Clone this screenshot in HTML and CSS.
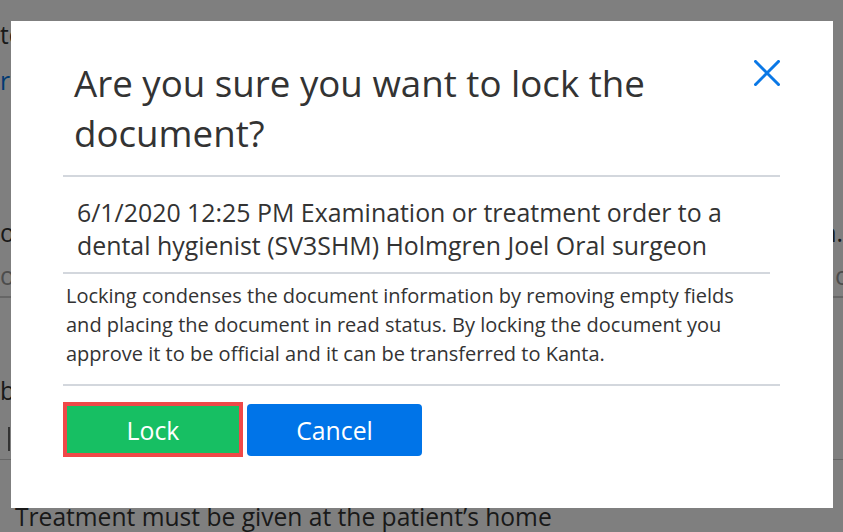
FILE: index.html
```html
<!DOCTYPE html>
<html lang="en">
<head>
<meta charset="utf-8">
<title>Lock document</title>
<link rel="stylesheet" href="styles.css">
</head>
<body>
<main class="page">
  <p class="bg-text bg-first">teeth cleaning and examination of the patient</p>
  <a class="bg-link" href="#">referral to the dental hygienist</a>
  <div class="bg-row">
    <span>ojekt for the home visit of the patient</span>
    <span>visit plan.</span>
  </div>
  <div class="bg-inputs">
    <span class="bg-input">ohje</span>
    <span class="bg-input">ohje</span>
  </div>
  <p class="bg-text bg-label">basis of the treatment</p>
  <div class="bg-box"></div>
  <p class="bg-text bg-last">Treatment must be given at the patient’s home</p>
</main>

<div class="overlay">
  <section class="modal" role="dialog" aria-labelledby="lock-title">
    <header class="modal-header">
      <h1 class="modal-title" id="lock-title">Are you sure you want to lock the document?</h1>
      <button class="close" type="button" aria-label="Close">
        <svg width="26" height="26" viewBox="0 0 26 26" aria-hidden="true">
          <path d="M1.5 1.5 L24.5 24.5 M24.5 1.5 L1.5 24.5" stroke="#0a78e6" stroke-width="3" stroke-linecap="square" fill="none"/>
        </svg>
      </button>
    </header>
    <div class="rule"></div>
    <div class="doc-item">6/1/2020 12:25 PM Examination or treatment order to a dental hygienist (SV3SHM) Holmgren Joel Oral surgeon</div>
    <p class="doc-note">Locking condenses the document information by removing empty fields and placing the document in read status. By locking the document you approve it to be official and it can be transferred to Kanta.</p>
    <div class="rule"></div>
    <div class="actions">
      <button class="btn btn-lock" type="button">Lock</button>
      <button class="btn btn-cancel" type="button">Cancel</button>
    </div>
  </section>
</div>
</body>
</html>
```

FILE: styles.css
```css
html, body {
  margin: 0;
  height: 100%;
  overflow: hidden;
}

body {
  font-family: "Open Sans", "Noto Sans", sans-serif;
  color: #333;
  background: #fff;
}

/* background page */
.page {
  font-size: 24.6px;
  line-height: 33px;
  white-space: nowrap;
}

.bg-text {
  margin: 0;
}

.bg-first {
  padding-top: 18px;
}

.bg-link {
  display: block;
  margin-top: 13px;
  color: #0074e6;
  text-decoration: none;
}

.bg-row {
  display: flex;
  justify-content: space-between;
  margin-top: 119px;
}

.bg-inputs {
  display: grid;
  grid-template-columns: 835px 1fr;
  margin-top: 10px;
  border-bottom: 2px solid #ccc;
  padding-bottom: 4px;
}

.bg-input {
  color: #999;
}

.bg-label {
  margin-top: 76px;
}

.bg-box {
  margin: 20px 0 0 8px;
  height: 24px;
  border-left: 2px solid #666;
}

.bg-last {
  border-top: 1px solid #ccc;
  margin-top: 8px;
  padding-top: 40px;
  padding-left: 15px;
}

/* modal */
.overlay {
  position: fixed;
  inset: 0;
  background: rgba(0, 0, 0, 0.5);
  display: flex;
  padding: 21px 10px 24px 11px;
  box-sizing: border-box;
}

.modal {
  flex: 1;
  background: #fff;
  padding: 37px 53px 0 52px;
}

.modal-header {
  display: flex;
  justify-content: space-between;
  align-items: flex-start;
  margin-bottom: 17px;
}

.modal-title {
  margin: 0;
  padding-left: 11px;
  font-size: 36.7px;
  line-height: 50px;
  font-weight: 400;
  color: #333;
}

.close {
  flex: none;
  width: 26px;
  height: 26px;
  margin-top: 2px;
  padding: 0;
  border: 0;
  background: none;
}

.close svg {
  display: block;
}

.rule {
  height: 2px;
  background: #d3d7dd;
}

.doc-item {
  margin: 19px 10px 0 0;
  padding: 0 0 10px 14px;
  border-bottom: 2px solid #d3d7dd;
  font-size: 24.9px;
  line-height: 33px;
}

.doc-note {
  margin: 8px 34px 16px 0;
  padding-left: 3px;
  font-size: 20px;
  line-height: 28.8px;
}

.actions {
  display: flex;
  align-items: center;
  gap: 4px;
  margin-top: 16px;
}

.btn {
  font-family: inherit;
  font-size: 24.8px;
  color: #fff;
  border: 0;
  padding: 0;
  box-sizing: border-box;
}

.btn-lock {
  width: 180px;
  height: 55px;
  background: #17bf63;
  border: 4px solid #f04848;
}

.btn-cancel {
  width: 175px;
  height: 52px;
  background: #0074e8;
  border-radius: 4px;
}
```
